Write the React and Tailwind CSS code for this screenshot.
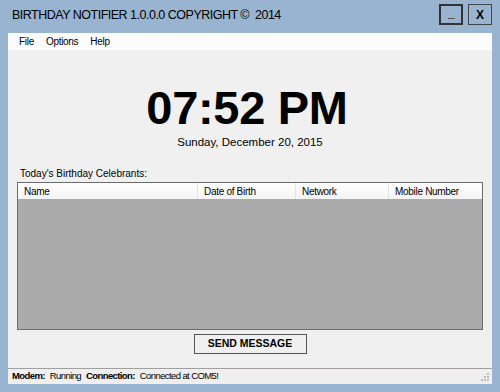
export default function App() {
  const cols = [
    { label: 'Name', w: 'w-[180px]' },
    { label: 'Date of Birth', w: 'w-[98px]' },
    { label: 'Network', w: 'w-[93px]' },
    { label: 'Mobile Number', w: 'flex-1' },
  ];

  return (
    <div
      className="w-[500px] h-[392px] bg-[#99b4d1] flex flex-col overflow-hidden"
      style={{ fontFamily: "'Liberation Sans', Arial, sans-serif" }}
    >
      {/* Title bar */}
      <div className="h-[33px] flex items-start justify-between pl-[12px] pr-[8px]">
        <div className="pt-[6px] text-[12.5px] tracking-[-0.5px] text-black">
          BIRTHDAY NOTIFIER 1.0.0.0 COPYRIGHT ©&nbsp; 2014
        </div>
        <div className="flex gap-[5px] pt-[4px]">
          <button className="w-[24px] h-[21px] border-2 border-[#333] bg-[#99b4d1] flex items-end justify-center pb-[4px]">
            <span className="block w-[7px] h-[1px] bg-[#555]" />
          </button>
          <button className="w-[24px] h-[21px] border border-[#444] bg-[#99b4d1] flex items-center justify-center text-[12px] font-bold text-black">
            X
          </button>
        </div>
      </div>

      {/* Client area */}
      <div className="mx-[8px] flex-1 mb-[8px] bg-[#f0f0f0] flex flex-col">
        {/* Menu */}
        <div className="h-[17px] bg-[#fcfcfc] flex items-center gap-[12px] pl-[11px] text-[10px] tracking-[-0.3px] text-black">
          <span>File</span>
          <span>Options</span>
          <span>Help</span>
        </div>

        {/* Clock */}
        <div className="flex flex-col items-center pt-[34px]">
          <div className="text-[47px] font-bold leading-[48px] text-black tracking-[-0.3px] mr-[6px]">07:52 PM</div>
          <div className="text-[11.5px] text-black mt-[2px]">Sunday, December 20, 2015</div>
        </div>

        {/* Table */}
        <div className="px-[9px] mt-[17px]">
          <div className="text-[10px] text-black pl-[3px] leading-[12px]">Today's Birthday Celebrants:</div>
          <div className="mt-[2px] h-[148px] border border-[#6b6b6b] bg-[#ababab] flex flex-col">
            <div className="h-[16px] bg-gradient-to-b from-white to-[#f4f4f4] flex text-[10px] tracking-[-0.3px] text-black">
              {cols.map((c, i) => (
                <div
                  key={i}
                  className={`${c.w} h-full flex items-center pl-[6px] ${i < 3 ? 'border-r border-[#e3e3e3]' : ''}`}
                >
                  {c.label}
                </div>
              ))}
            </div>
          </div>
        </div>

        {/* Button */}
        <div className="flex justify-center mt-[4px]">
          <button className="w-[113px] h-[20px] border border-[#555] bg-[#f0f0f0] text-[10.5px] font-bold text-black">
            SEND MESSAGE
          </button>
        </div>

        <div className="flex-1" />

        {/* Status bar */}
        <div className="h-[16px] border-t border-[#a0a0a0] bg-[#f0eeee] flex items-center pl-[4px] text-[9.5px] tracking-[-0.6px] text-black relative">
          <span className="font-bold">Modem:</span>
          <span className="ml-[5px]">Running</span>
          <span className="font-bold ml-[5px]">Connection:</span>
          <span className="ml-[5px]">Connected at COM5!</span>
          <svg className="absolute right-[2px] bottom-[2px]" width="10" height="10" viewBox="0 0 10 10">
            <rect x="7" y="1" width="2" height="2" fill="#bbb" />
            <rect x="4" y="4" width="2" height="2" fill="#bbb" />
            <rect x="7" y="4" width="2" height="2" fill="#bbb" />
            <rect x="1" y="7" width="2" height="2" fill="#bbb" />
            <rect x="4" y="7" width="2" height="2" fill="#bbb" />
            <rect x="7" y="7" width="2" height="2" fill="#bbb" />
          </svg>
        </div>
      </div>
    </div>
  );
}
